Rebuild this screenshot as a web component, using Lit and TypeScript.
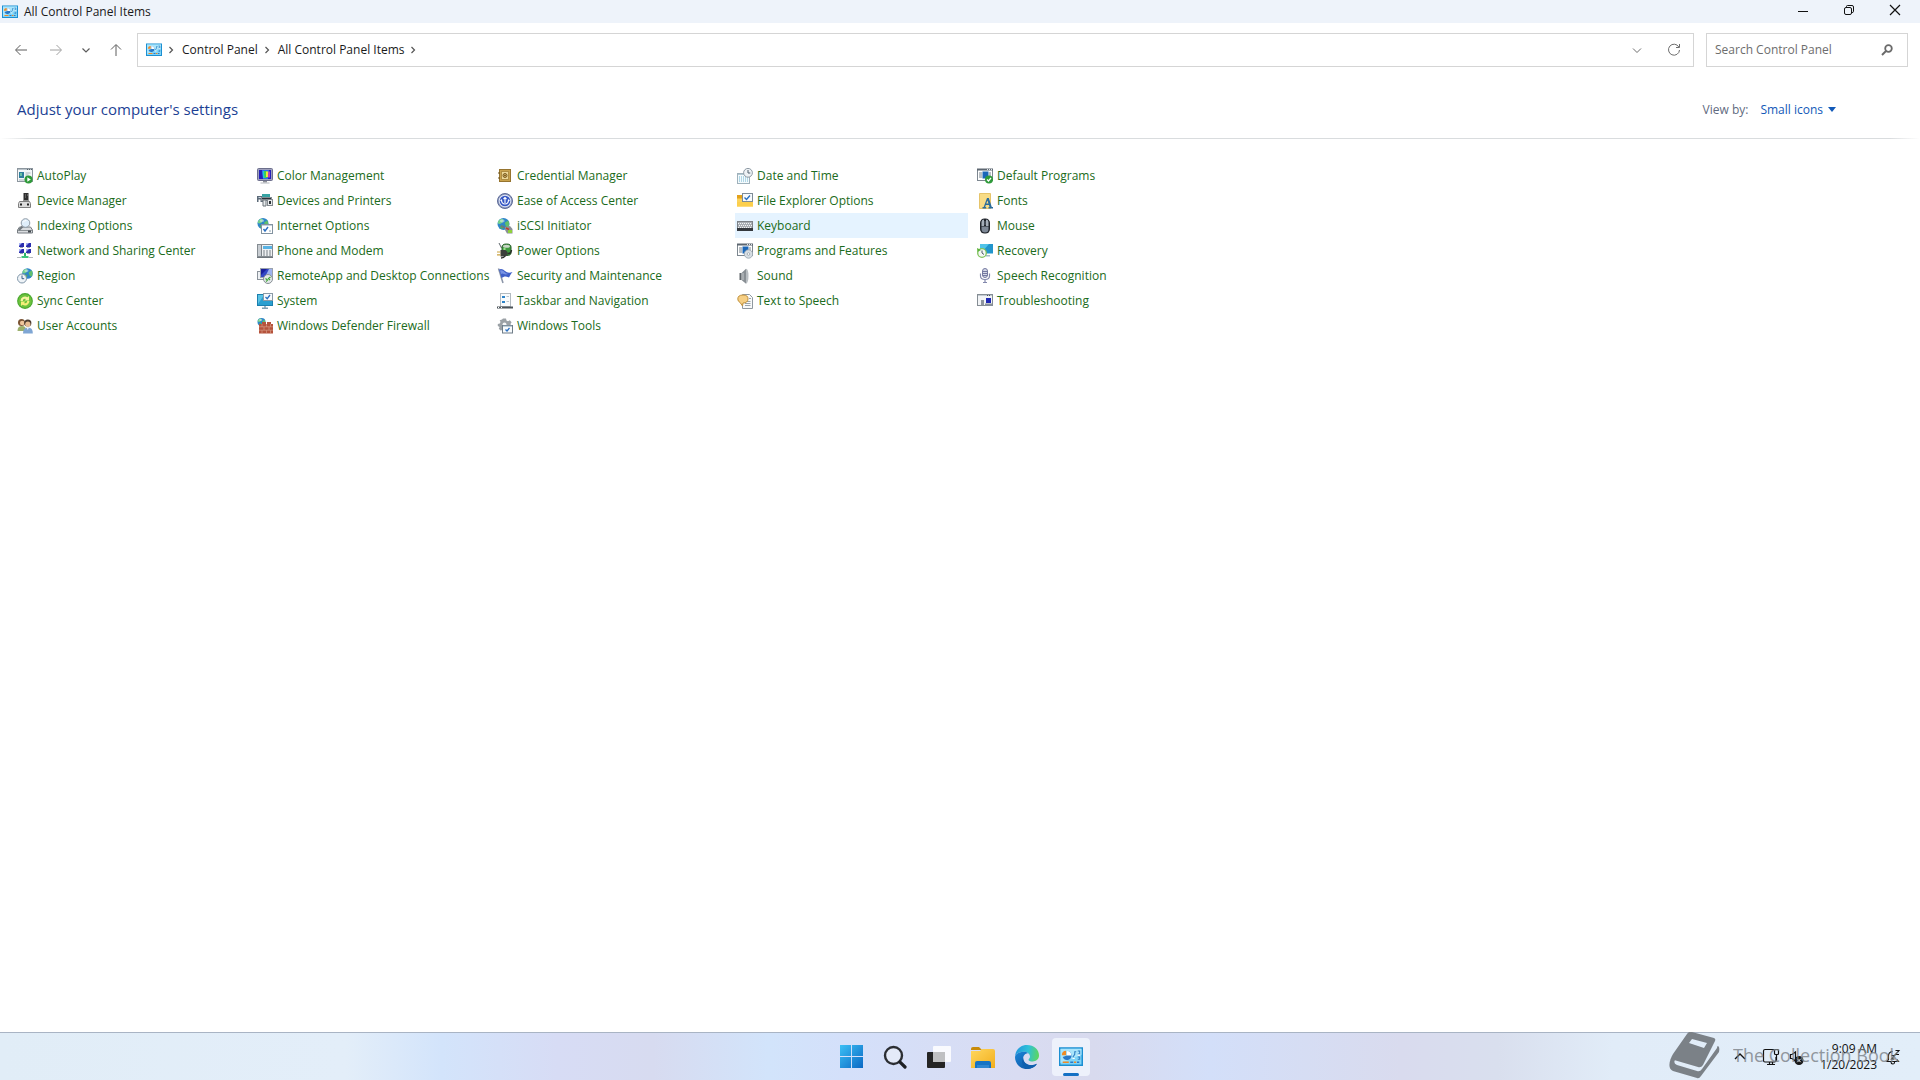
import { LitElement, html, svg, css, TemplateResult } from "lit";
import { customElement, property, state } from "lit/decorators.js";
import { classMap } from "lit/directives/class-map.js";

type Art = TemplateResult<2>;

/* Blue panel with a pie chart and sliders, used in three places. */
const panelArt: Art = svg`
  <rect x="0.5" y="2" width="15" height="11.500" fill="#7fd4f7" stroke="#1b8fd2"/>
  <path d="M1 2.500h14v4L1 12z" fill="#a9e4fb"/>
  <path d="M5.300 7V4A3 3 0 1 1 2.500 8z" fill="#2878c8"/>
  <path d="M5.300 7V4a3 3 0 0 1 2.900 3z" fill="#fff"/>
  <path d="M4.700 6.800H1.900A2.900 2.900 0 0 1 4.700 3.900z" fill="#f08a24"/>
  <path d="M9.200 8.200l1.300-2V4.500h1M12.500 4h1.300v2h-1.300M12.500 8h1.300v1.500h-1.300" stroke="#2c7fc4" stroke-width=".7"/>
  <path d="M12.500 6.800h1.500M9 9h1.500" stroke="#fff" stroke-width=".8"/>
  <path d="M2.500 11.500h4" stroke="#f08a24" stroke-width="1"/>
  <path d="M7.500 11.500h2M12 11.500h1.500" stroke="#2878c8" stroke-width="1"/>
  <path d="M10 11.500h1.500" stroke="#f08a24" stroke-width="1"/>`;

const windowArt: Art = svg`
  <rect x="0.5" y="1.500" width="15" height="11" fill="#fff" stroke="#7d8790"/>
  <path d="M0 1.500h16" stroke="#5d6670" stroke-width="2"/>
  <path d="M10 1.500h1M12 1.500h1M14 1.500h1" stroke="#dfe5ea"/>`;

const globe = (cx: number, cy: number, r: number): Art => svg`
  <g transform="translate(${cx} ${cy}) scale(${r / 5})">
    <circle r="5" fill="#2f86c9"/>
    <path d="M-3.500 -3.500Q-1 -5 0 -3.500L-1 -1L-3 0L-4.800 -0.500Q-4.800 -2.500 -3.500 -3.500z" fill="#74d08c"/>
    <path d="M1 -1L4 -3Q5.500 0 4 3L2 2z" fill="#5fbf6b"/>
    <path d="M-2 1L0 1.500L-1 4.500L-3 3z" fill="#4fae5c"/>
    <ellipse cx="-1" cy="-2.500" rx="2" ry="1.200" fill="#fff" opacity=".45"/>
  </g>`;

const ICONS: Record<string, Art> = {
  autoplay: svg`
    <rect x="0.5" y="0.5" width="15" height="13" fill="#f4f7f9" stroke="#8c969e"/>
    <path d="M1 1.500h14" stroke="#b9c2c9"/><path d="M10 1.500h1M12 1.500h1M14 1.500h1" stroke="#59636b"/>
    <rect x="2" y="4" width="5" height="6" fill="#2f7f9c"/><rect x="3" y="5" width="2" height="3" fill="#6cc0a4"/>
    <path d="M8.500 5h5M8.500 7h3M2 12h6" stroke="#a9b4bb"/>
    <circle cx="11.500" cy="11.500" r="4" fill="#2f9a3a"/><path d="M10.300 9.300v4.400l3.500-2.200z" fill="#fff"/>`,
  device: svg`
    <rect x="6.500" y="0" width="5" height="8" fill="#2e2e2e"/><path d="M8 2h1M10 2h1M8 4h1" stroke="#8d8d8d"/>
    <path d="M7 7h4v3H7z" fill="#8f8f8f"/>
    <path d="M2.500 8.500h10l1 2v4h-12v-4z" fill="#dcdcdc" stroke="#7e7e7e"/>
    <path d="M4 10.500v2M11 10.500v2" stroke="#222" stroke-width="2"/>`,
  indexing: svg`
    <path d="M2.500 9h11l2 3v3H.5v-3z" fill="#d9dcdf" stroke="#777d82"/>
    <path d="M1 12.500h14" stroke="#8d9397"/><rect x="11" y="12.500" width="3" height="2" fill="#444b50"/>
    <path d="M5.500 8.500L2 12" stroke="#6f767c" stroke-width="2"/>
    <circle cx="8.500" cy="5" r="4.300" fill="#dfeefa" stroke="#8f9ba6"/>
    <path d="M6 4.500Q7 2.300 9.500 2.500" stroke="#fff" fill="none"/>`,
  network: svg`
    ${[[2, 0], [9, 0], [2, 6], [9, 6]].map(([x, y]) => svg`
      <rect x=${x} y=${y} width="5" height="4" fill="#2b2fae"/>
      <path d="M${x} ${y}h3l-3 3z" fill="#a9b3f4"/>
      <path d="M${x + 1} ${y + 4.5}h3" stroke="#9a9eb4"/>`)}
    <path d="M7.500 10h1v3h-1z" fill="#2fb36a" stroke="#2fb36a"/>
    <path d="M4.500 14h7" stroke="#3cc47c" stroke-width="2"/>
    <path d="M0 14.500h4M12 14.500h4" stroke="#b4b9bc"/>`,
  region: svg`${globe(10.5, 5.5, 5.3)}
    <circle cx="5" cy="10.500" r="4.500" fill="#eef3f7" stroke="#7f95a8"/>
    <path d="M5 7.500v3.200h2.200" stroke="#3c5d85" fill="none"/>`,
  sync: svg`
    <circle cx="8" cy="8" r="7.900" fill="#49a72e"/><circle cx="8" cy="8" r="6.800" fill="#6cc23e"/>
    <path d="M3.500 8A4.500 4.500 0 0 1 10.500 4.300L12 3v4.500H7.500L9 6Q6 5 5.800 8z" fill="#f7f3a0"/>
    <path d="M12.500 8A4.500 4.500 0 0 1 5.500 11.700L4 13V8.500h4.500L7 10q3 1 3.200-2z" fill="#f5ee7a"/>`,
  users: svg`
    <circle cx="4.500" cy="4.500" r="3.500" fill="#7a5333"/><circle cx="5.200" cy="5" r="2.300" fill="#f0c79c"/>
    <path d="M.5 13q0-5 4.500-5t4 5z" fill="#9bb06c"/>
    <circle cx="10.800" cy="5" r="3.600" fill="#4b3b2e"/><circle cx="10.800" cy="6.200" r="2.600" fill="#e8bd93"/>
    <path d="M6 15.500q0-6 5-6t4.800 6z" fill="#7fa6d4"/><path d="M9.800 9.500h2l-1 2.500z" fill="#fff"/>`,
  color: svg`
    <rect x="0.5" y="0.5" width="15" height="12" rx="1" fill="#9ea0bd" stroke="#6c6f8c"/>
    <rect x="2" y="2" width="12" height="9" fill="#2420b8"/>
    <path d="M5 2h7l-1 9H6z" fill="#2b6df0"/>
    <path d="M5.500 3h5l-.5 7H6z" fill="#22c3dc"/><path d="M7 3h3v7H7.500z" fill="#3dd34d"/>
    <path d="M9 3.500h2.500l-.5 5.500H9z" fill="#f2e23d"/><path d="M11.500 3.500h1.500v6h-2z" fill="#c633c0"/>
    <path d="M6 13h4v1.500H6z" fill="#8b8f97"/><path d="M3.500 15h9" stroke="#b4b7bd"/>`,
  printers: svg`
    <path d="M0 3h7v6H0z" fill="#5c6a78"/><path d="M1.500 4.500h4" stroke="#c9d5e0"/>
    <path d="M5 1h8v3H5z" fill="#36a3a3"/><path d="M4 4h11v4H4z" fill="#858d94"/>
    <path d="M5 5.500h9" stroke="#2c3338"/>
    <path d="M1.500 6.500h2v5h-2z" fill="#fff"/><path d="M6 7h3v6H6z" fill="#e6e9eb" stroke="#6c747b"/>
    <rect x="10.500" y="6.500" width="5" height="6" fill="#e8eaec" stroke="#83898e"/>
    <rect x="12" y="8" width="2" height="3" fill="#2c3338"/>`,
  internet: svg`${globe(6, 5.5, 5.5)}
    <rect x="4.500" y="6.500" width="11" height="9" fill="#fff" stroke="#8393a0"/>
    <path d="M5 7.500h10" stroke="#c5d3de"/>
    <path d="M6.500 11l1.500 2l3-4" stroke="#2a6fc0" stroke-width="1.400" fill="none"/><path d="M12 13h2" stroke="#8aa0b0"/>`,
  phone: svg`
    <rect x="0.5" y="1.500" width="15" height="12" fill="#eef0f2" stroke="#858c92"/>
    <path d="M1 2h3v11H1z" fill="#c8cdd2"/><path d="M4.500 2v11" stroke="#7b8288"/>
    <rect x="6" y="3" width="9" height="3" fill="#58b3e4"/>
    <path d="M6 8h2M9 8h2M12 8h2M6 10h2M9 10h2M12 10h2M6 12h2M9 12h2M12 12h2" stroke="#7b838a"/>
    <path d="M0 14.500h16" stroke="#6f767c"/>`,
  remote: svg`
    <rect x="0.5" y="3.500" width="7" height="8" fill="#eef1f4" stroke="#8b939b"/>
    <rect x="3.500" y="0.500" width="12" height="9" fill="#3347c4" stroke="#9aa2ad"/>
    <path d="M4 1h6L4 7z" fill="#1a1f9a"/><path d="M8 9l4-8h3v8z" fill="#9db2ee"/>
    <circle cx="11" cy="11" r="4.500" fill="#e4e8ea" stroke="#888f95"/>
    <path d="M8.500 10.500l2 1.500l-1.500 1.500M13.500 9l-2 1.500l1.500 1.500" stroke="#3fa535" fill="none" stroke-width="1.200"/>`,
  system: svg`
    <rect x="0.5" y="1.500" width="15" height="11" fill="#2a9fd0" stroke="#1b7fae"/>
    <path d="M1 2h6L1 11z" fill="#6fd3ec" opacity=".7"/>
    <rect x="6.500" y="0.500" width="9" height="7" fill="#f7fafc" stroke="#8a9aa6"/>
    <path d="M8.500 4l1.700 1.700L13 2" stroke="#2a6fc0" stroke-width="1.300" fill="none"/>
    <path d="M8 13v2M5 15.200h6" stroke="#7f9fb2" stroke-width="1.500"/>`,
  firewall: svg`${globe(4.5, 4, 4)}
    <path d="M2 6h3V4h4v2h1V4h4v2h2v9.500H2z" fill="#b5533c"/>
    <path d="M2 8.800h14M2 12.200h14M5 6v2.800M9.500 6v2.800M13.500 6v2.800M7 8.800v3.400M12 8.800v3.400M5 12.200v3.300M9.500 12.200v3.300M13.500 12.200v3.300" stroke="#dba48f" stroke-width=".6"/>`,
  credential: svg`
    <rect x="2.500" y="1.500" width="11" height="12" fill="#c9a24d" stroke="#96742f"/>
    <rect x="4.500" y="3.500" width="7" height="8" fill="#ecd798" stroke="#b08e43"/>
    <circle cx="8" cy="7.500" r="2" fill="#d3b064" stroke="#7d5e22"/><circle cx="8" cy="7.500" r=".8" fill="#5d4413"/>
    <path d="M2 4v2M2 9v2" stroke="#6a5018"/>`,
  ease: svg`
    <circle cx="8" cy="8" r="7.500" fill="#8d99bd" stroke="#5d6b98"/><circle cx="8" cy="8" r="6.200" fill="#e6ebf8"/>
    <circle cx="8" cy="8" r="5.300" fill="#3557c4"/>
    <path d="M8 10V4.500M6.500 6L8 4.500L9.500 6M4.500 6.500Q4.500 11 8 11T11.500 6.500M4.500 6.500l-.8 1.500M11.500 6.500l.8 1.500" stroke="#fff" fill="none" stroke-width="1.100"/>`,
  iscsi: svg`${globe(6.5, 6, 6)}
    <path d="M4 8l5 2l3 3" stroke="#6f767c" stroke-width="1.500" fill="none"/>
    <path d="M8 9l5-1l2.500 3v4.500H10L8 12z" fill="#8a9096"/><rect x="11" y="12" width="4" height="3" fill="#8fd13c"/>
    <path d="M9 10l3 1.500" stroke="#c33c2c" stroke-width="1.500"/>`,
  power: svg`
    <path d="M2 0l2.500 5" stroke="#5d646a"/>
    <path d="M5 4q0-3 4.500-3T14 4v6q0 2.500-4.500 2.500T5 10z" fill="#3f9a3e" stroke="#275c28"/>
    <ellipse cx="9.500" cy="3.300" rx="3.500" ry="1.500" fill="#c9d6c6"/><path d="M7.500 5v3" stroke="#9be08a" stroke-width="2"/>
    <path d="M3.500 7h5l2 2v3l-2 1.500h-5z" fill="#3b3f3b"/>
    <path d="M0 9h3.500M0 11.800h3.500" stroke="#c9a13f" stroke-width="1.200"/>
    <path d="M10.500 10.500Q14 11 14.500 7M8 13q-1 2-4 2" stroke="#2b2e2b" fill="none" stroke-width="1.500"/>`,
  security: svg`
    <path d="M1.500 .5l4.500 14.500" stroke="#8b95a8" stroke-width="1.500"/>
    <path d="M2 1.500Q5 0 8 3t7.500 1Q13.500 6 12 9.500Q9 8 7.500 8.500T4.500 10z" fill="#3f5fc8"/>
    <path d="M3 2.500Q5.500 1.500 7.500 4T12 5.500Q9 7 7 6T4 6z" fill="#8ba4ee" opacity=".75"/>`,
  taskbar: svg`
    <rect x="3.500" y="0.500" width="10" height="13" fill="#f9fbfc" stroke="#b3bac0"/>
    <path d="M5 4h3M5 9h3" stroke="#2c83c8" stroke-width="2"/>
    <path d="M9.500 3.500h2.500M9.500 8.500h2.500" stroke="#b9c4cc"/>
    <path d="M0 14.500h16" stroke="#4b5359" stroke-width="2"/><path d="M1 14.500h1M4 14.500h1" stroke="#fff"/>`,
  tools: svg`
    <path d="M6 .5h3l.5 2l1.500.7l1.800-.9l1.800 2L13.500 6l.5 1.500v2L11 12H5.500l-2 .5l-1.700-1.800l.8-1.700L.8 8V6l2-.6L3.500 4l-.8-1.800L5 1.500z" fill="#9ba1a6"/>
    <circle cx="7.500" cy="6.500" r="2" fill="#f5f6f7"/>
    <rect x="5.500" y="7.500" width="10" height="7.500" fill="#f7fafc" stroke="#6f7d88"/>
    <path d="M6 8h9" stroke="#8aa2b4"/><path d="M8.500 11.500l1.500 1.500l2.500-3" stroke="#2a6fc0" fill="none" stroke-width="1.300"/>`,
  date: svg`
    <rect x="0.5" y="5.500" width="12" height="10" fill="#f3fafd" stroke="#9fb1bb"/>
    <path d="M1 6.500h10" stroke="#b4c9d3"/>
    <path d="M2 9h9M2 11h9M2 13h9" stroke="#6fb4cf" stroke-dasharray="1 1"/>
    <circle cx="11" cy="4.800" r="4.400" fill="#eef2f5" stroke="#8d99a3"/>
    <path d="M11 2v3h2.300" stroke="#50606e" fill="none"/>`,
  explorer: svg`
    <path d="M0 2h5l1.500 1.500H15V13H0z" fill="#e3a21b"/><path d="M0 5.500h16V13.500H0z" fill="#fbd35c"/>
    <rect x="5.500" y="0.500" width="10" height="8" fill="#f7fafc" stroke="#7d8b97"/>
    <path d="M7.500 4.500l2 2L13 2.500" stroke="#2a6fc0" stroke-width="1.400" fill="none"/>
    <path d="M0 9h16v4.500H0z" fill="#fccf4d"/>`,
  keyboard: svg`
    <rect x="0.5" y="3.500" width="15" height="9" fill="#a9aeb4" stroke="#7d8288"/>
    <path d="M1 5.500h14M2 7.500h13M1 9.500h14" stroke="#f4f5f6" stroke-dasharray="1 1"/>
    <path d="M0 11.500h16" stroke="#34383d" stroke-width="3"/>`,
  programs: svg`${windowArt}
    <path d="M2 5h3M2 7h3M2 9h3M12 5h2M12 7h2M12 9h2" stroke="#77828b"/>
    <rect x="5.500" y="3.500" width="6" height="7" fill="#1a66b8"/>
    <circle cx="11.500" cy="11" r="4.200" fill="#d7dee4" stroke="#96a3ad" stroke-width=".8"/>
    <circle cx="11.500" cy="11" r="1.300" fill="#fff" stroke="#8d99a3" stroke-width=".7"/>`,
  sound: svg`
    <path d="M2.500 5h2v7h-2z" fill="#60666b"/><path d="M4.500 5L9 .8v15L4.500 12z" fill="#898f94"/>
    <path d="M9 .8Q11.500 1 11.500 8T9 15.800z" fill="#b9bec2"/><path d="M6 5v7" stroke="#c9cdd0"/>`,
  tts: svg`
    <path d="M5.500 1.500h7l3 3v11h-10z" fill="#f8f9fa" stroke="#8f989f"/>
    <path d="M8 8.500h5.500M8 10.500h5.500M8 12.500h5.500M12 5.500h2" stroke="#9aa4ab"/>
    <path d="M.8 6Q.8 2 6 2t5 4t-5 4l-.5 3l-2.500-3.600Q.8 8.500.8 6z" fill="#f6cf84" stroke="#c1913c"/>`,
  defaults: svg`${windowArt}
    <path d="M2 5h3M2 7h3M2 9h3M12 5h2M12 7h2" stroke="#77828b"/>
    <rect x="5.500" y="3.500" width="6" height="7" fill="#1a66b8"/>
    <circle cx="12" cy="11.500" r="4" fill="#2f9a3a"/><path d="M10 11.500l1.500 1.500l2.500-3" stroke="#fff" stroke-width="1.200" fill="none"/>`,
  fonts: svg`
    <path d="M2.500 .5h11v15h-11z" fill="#f8dc86" stroke="#e6c46a"/>
    <path d="M10 5h1.800l3 9h1.200v1.500h-4.500V14h1l-.6-2H8.800l-.6 2h1v1.500H5.500V14h1.200zM10.400 7.500L9.300 10.600h2.200z" fill="#2a6c9c"/>`,
  mouse: svg`
    <rect x="3" y="0.500" width="10" height="15" rx="4.500" fill="#20242b"/>
    <path d="M4.500 4Q4.500 1.800 7 1.500v6.500H4.500zM11.500 4Q11.500 1.800 9 1.500v6.500h2.500z" fill="#a4adb8"/>
    <path d="M4.500 8.500h7V11q0 3.500-3.500 3.500T4.500 11z" fill="#7e8896"/><path d="M8 3v4" stroke="#5b6470" stroke-width="1.200"/>`,
  recovery: svg`
    <rect x="3" y="1" width="13" height="9.500" fill="#2295cc"/><path d="M3 1h9L5 9H3z" fill="#4fc3e8"/>
    <path d="M9 12.800h4" stroke="#8aa9bb" stroke-width="1.200"/>
    <circle cx="5" cy="10" r="4.300" fill="#f4f8f4" stroke="#7fc25b" stroke-width="1.300"/>
    <path d="M0 5l.5 4L4 7z" fill="#5bb23a"/><path d="M5 7.500V10l2 1.500" stroke="#4b5a64" fill="none"/>`,
  speech: svg`
    <rect x="5.500" y="0.500" width="5" height="9" rx="2.500" fill="#d5d8e8" stroke="#7479a0"/>
    <path d="M5.500 3.500h5M5.500 5.500h5M5.500 7.500h5" stroke="#7479a0"/>
    <path d="M3.500 5.500V8q0 3.500 4.500 3.500T12.500 8V5.500M8 11.500V14M6 14.500h4" stroke="#8388ac" fill="none" stroke-width="1.200"/>`,
  trouble: svg`
    <rect x="0.5" y="1.500" width="15" height="11" fill="#f2f4f6" stroke="#858d94"/>
    <path d="M1 2.500h14" stroke="#c4ccd2"/><path d="M10 2.500h1M12 2.500h1" stroke="#4c555d"/>
    <rect x="9" y="5" width="5" height="5" fill="#1f28b4"/><path d="M8 11.500h7" stroke="#8b929a" stroke-width="2"/>
    <path d="M5.500 7v5" stroke="#8f969e" stroke-width="3"/>`,
};

interface Item { icon: string; label: string; active?: boolean }

const ITEMS: Item[] = [
  { icon: "autoplay", label: "AutoPlay" },
  { icon: "color", label: "Color Management" },
  { icon: "credential", label: "Credential Manager" },
  { icon: "date", label: "Date and Time" },
  { icon: "defaults", label: "Default Programs" },
  { icon: "device", label: "Device Manager" },
  { icon: "printers", label: "Devices and Printers" },
  { icon: "ease", label: "Ease of Access Center" },
  { icon: "explorer", label: "File Explorer Options" },
  { icon: "fonts", label: "Fonts" },
  { icon: "indexing", label: "Indexing Options" },
  { icon: "internet", label: "Internet Options" },
  { icon: "iscsi", label: "iSCSI Initiator" },
  { icon: "keyboard", label: "Keyboard", active: true },
  { icon: "mouse", label: "Mouse" },
  { icon: "network", label: "Network and Sharing Center" },
  { icon: "phone", label: "Phone and Modem" },
  { icon: "power", label: "Power Options" },
  { icon: "programs", label: "Programs and Features" },
  { icon: "recovery", label: "Recovery" },
  { icon: "region", label: "Region" },
  { icon: "remote", label: "RemoteApp and Desktop Connections" },
  { icon: "security", label: "Security and Maintenance" },
  { icon: "sound", label: "Sound" },
  { icon: "speech", label: "Speech Recognition" },
  { icon: "sync", label: "Sync Center" },
  { icon: "system", label: "System" },
  { icon: "taskbar", label: "Taskbar and Navigation" },
  { icon: "tts", label: "Text to Speech" },
  { icon: "trouble", label: "Troubleshooting" },
  { icon: "users", label: "User Accounts" },
  { icon: "firewall", label: "Windows Defender Firewall" },
  { icon: "tools", label: "Windows Tools" },
];

const glyph = (art: Art, size = 16, box = 16) =>
  html`<svg width=${size} height=${size} viewBox="0 0 ${box} ${box}" fill="none" aria-hidden="true">${art}</svg>`;

const line = (d: string, width = 1) =>
  glyph(svg`<path d=${d} stroke="currentColor" stroke-width=${width}/>`);

const base = css`
  :host { font-family: "Open Sans", "Noto Sans", sans-serif; font-size: 12px; line-height: 16px; }
  * { box-sizing: border-box; }
  svg { display: block; flex: none; }
  button, input, select { font: inherit; color: inherit; border: 0; background: none; padding: 0; margin: 0; }
  button { display: flex; align-items: center; justify-content: center; }
  a { color: inherit; text-decoration: none; }
`;

@customElement("title-bar")
export class TitleBar extends LitElement {
  static styles = [base, css`
    :host { display: flex; align-items: center; height: 23px; padding: 0 2px; background: #eef3fa; color: #1a1a1a; }
    .name { flex: 1; margin-left: 6px; }
    .control { width: 46px; height: 23px; padding-bottom: 3px; color: #111; }
  `];
  render() {
    return html`
      ${glyph(panelArt)}
      <span class="name">All Control Panel Items</span>
      <button class="control" aria-label="Minimize">${line("M3 9.500h10")}</button>
      <button class="control" aria-label="Restore">${glyph(svg`
        <rect x="3.500" y="5.500" width="7" height="7" rx="1.500" stroke="currentColor"/>
        <path d="M5.500 5V4.500q0-1 1-1H11q1.500 0 1.500 1.500v4.500q0 1-1.500 1" stroke="currentColor"/>`)}</button>
      <button class="control" aria-label="Close">${line("M3 3l10 10M13 3L3 13", 1.2)}</button>`;
  }
}

@customElement("address-row")
export class AddressRow extends LitElement {
  static styles = [base, css`
    :host { display: flex; align-items: center; padding: 10px 12px; color: #1a1a1a; }
    .nav { display: flex; align-items: center; color: #5c5c5c; width: 125px; }
    .nav button { height: 34px; }
    .back, .up { width: 17px; }
    .forward { width: 17px; margin-left: 18px; color: #a0a0a0; }
    .recent { width: 16px; margin: 0 13px 0 14px; }
    .address { flex: 1; display: flex; align-items: center; height: 34px; border: 1px solid #d5d5d5; padding: 0 1px 0 8px; }
    .crumbs { display: flex; align-items: center; flex: 1; }
    .crumbs svg { color: #555; }
    .sep { margin: 0 3px 0 1px; }
    .tool { width: 37px; height: 32px; color: #6d6d6d; }
    .search { display: flex; align-items: center; width: 202px; height: 34px; margin-left: 12px; border: 1px solid #d5d5d5; padding: 0 12px 0 8px; color: #6a6a6a; }
    .search input { flex: 1; min-width: 0; outline: none; }
    .search input::placeholder { color: #6d6d6d; opacity: 1; }
  `];
  render() {
    const sep = line("M6.500 5l3 3l-3 3", 1.2);
    return html`
      <nav class="nav" aria-label="History">
        <button class="back" aria-label="Back">${line("M14 8H3M7.500 3L2.500 8l5 5")}</button>
        <button class="forward" aria-label="Forward">${line("M2 8h11M8.500 3l5 5l-5 5")}</button>
        <button class="recent" aria-label="Recent locations">${line("M4.500 6.500l3.500 3.500l3.500-3.500", 1.2)}</button>
        <button class="up" aria-label="Up">${line("M8 14V3M3 7.500L8 2.500l5 5")}</button>
      </nav>
      <div class="address">
        <div class="crumbs">
          ${glyph(panelArt)}
          <span class="sep">${sep}</span><a href="#control-panel">Control Panel</a>
          <span class="sep">${sep}</span><a href="#all-items">All Control Panel Items</a>
          <span class="sep">${sep}</span>
        </div>
        <button class="tool" aria-label="Previous locations">${line("M4 6.500l4 4l4-4")}</button>
        <button class="tool" aria-label="Refresh">${glyph(svg`
          <path d="M12.800 5A5.500 5.500 0 1 0 13.500 8M13.500 2v3.500H10" stroke="currentColor"/>`)}</button>
      </div>
      <label class="search">
        <input type="search" aria-label="Search Control Panel" placeholder="Search Control Panel">
        ${glyph(svg`<circle cx="9.500" cy="6.500" r="3.300" stroke="currentColor" stroke-width="1.800"/>
          <path d="M7 9L3 13" stroke="currentColor" stroke-width="2"/>`)}
      </label>`;
  }
}

@customElement("settings-item")
export class SettingsItem extends LitElement {
  @property() icon = "";
  @property() label = "";
  @property({ type: Boolean }) active = false;
  static styles = [base, css`
    :host { display: block; min-width: 0; }
    .item { display: flex; align-items: center; gap: 4px; height: 25px; padding: 0 2px; margin-right: 7px; color: #1b6b20; white-space: nowrap; }
    .item:hover, .active { background: #e5f3ff; }
  `];
  render() {
    return html`<a href="#${this.icon}" class=${classMap({ item: true, active: this.active })}>
      ${glyph(ICONS[this.icon])}<span>${this.label}</span></a>`;
  }
}

@customElement("task-bar")
export class TaskBar extends LitElement {
  static styles = [base, css`
    :host {
      position: relative; display: grid; grid-template-columns: 1fr auto 1fr; height: 48px; border-top: 1px solid #a9b4c4; color: #111;
      background: linear-gradient(90deg, #e1edf7 0%, #e3eef9 18%, #d3e4fb 23%, #d7dcf5 29%, #d7dbf0 34%, #d2e4fb 40%, #d4e0fa 44%, #d9dcf2 53%, #d8daee 57%, #d3dff9 63%, #d9dbee 73%, #d9dfee 78%, #e1ecf8 84%, #e2eef9 100%);
    }
    .apps { grid-column: 2; display: flex; align-items: center; padding-left: 2px; }
    .app { position: relative; width: 44px; height: 46px; }
    .app.open::before { content: ""; position: absolute; inset: 4px 3px; border-radius: 4px; background: #edf1fb; }
    .app.open::after { content: ""; position: absolute; left: 14px; right: 14px; bottom: 4px; height: 3px; border-radius: 2px; background: #1470c4; }
    .app svg { position: relative; }
    .tray { display: flex; align-items: center; justify-content: flex-end; gap: 8px; padding-right: 19px; }
    .tray button { height: 40px; }
    .more { margin-right: 6px; }
    .clock { text-align: right; margin-left: 8px; }
    .mark { position: absolute; right: 21px; top: -1px; display: flex; align-items: center; gap: 13px; height: 46px; color: #7b8187; font-size: 18px; line-height: 24px; pointer-events: none; }
    .mark span { opacity: .8; }
  `];
  render() {
    return html`
      <nav class="apps" aria-label="Apps">
        <button class="app" aria-label="Start">${glyph(svg`
          <defs><linearGradient id="win" x1="0" y1="0" x2="24" y2="24" gradientUnits="userSpaceOnUse"><stop stop-color="#3cc0f5"/><stop offset="1" stop-color="#0a68c4"/></linearGradient></defs>
          <path d="M0 0h11.500v11.500H0zM12.500 0H24v11.500H12.500zM0 12.500h11.500V24H0zM12.500 12.500H24V24H12.500z" fill="url(#win)"/>`, 23, 24)}</button>
        <button class="app" aria-label="Search">${glyph(svg`
          <circle cx="10.500" cy="10.500" r="8.500" fill="#e4eaf8" stroke="#2b2e33" stroke-width="2.400"/>
          <path d="M16.800 16.800L22 22" stroke="#1d2024" stroke-width="3.200" stroke-linecap="round"/>`, 24, 24)}</button>
        <button class="app" aria-label="Task view">${glyph(svg`
          <rect x="0" y="7" width="18" height="16" rx="1" fill="#242424"/>
          <rect x="6" y="1" width="18" height="16" rx="1" fill="#fff" fill-opacity=".85"/>
          <rect x="6" y="7" width="12" height="10" fill="#bfc0c2"/>`, 24, 24)}</button>
        <button class="app" aria-label="File Explorer">${glyph(svg`
          <path d="M0 4q0-2 2-2h6l3 3H0z" fill="#c98b08"/>
          <defs><linearGradient id="fold" x1="0" y1="0" x2="1" y2="1"><stop stop-color="#ffd75e"/><stop offset="1" stop-color="#f2ae1c"/></linearGradient></defs>
          <path d="M0 6h9l2-2h11q2 0 2 2v17H0z" fill="url(#fold)"/>
          <path d="M4 23v-5q0-2 2-2h12q2 0 2 2v5z" fill="#1673c4"/><path d="M6 20h12v3H6z" fill="#2f86d0"/>`, 24, 24)}</button>
        <button class="app" aria-label="Edge">${glyph(svg`
          <defs>
            <linearGradient id="edge-top" x1="0" y1=".3" x2="1" y2=".4"><stop stop-color="#2296dd"/><stop offset=".55" stop-color="#2fc1d8"/><stop offset="1" stop-color="#5dd65f"/></linearGradient>
            <linearGradient id="edge-low" x1="0" y1="0" x2="1" y2="1"><stop stop-color="#1a86d8"/><stop offset="1" stop-color="#0e4d9a"/></linearGradient>
          </defs>
          <path d="M0 11.500C.5 4.500 5.500 0 12 0c7 0 12 4.800 12 10.300c0 4-3 6.200-6.200 6.200c-2.700 0-4.300-.9-4.300-1.800c0-.6 1.500-1.200 1.500-3.200C15 9 12.500 6.700 9 6.700C4.500 6.700 1 8.500 0 11.500z" fill="url(#edge-top)"/>
          <path d="M0 12C.5 8.700 4.500 6.700 9 6.700c2 0 3.500.6 4.500 1.500C10.500 8 8.200 10.200 8.200 13.300c0 4 3.800 6.900 8 6.900c2.400 0 4.300-.7 5.800-1.400C20 22 16.500 24 12 24C5 24 0 18.500 0 12z" fill="url(#edge-low)"/>
          <path d="M8.200 13.300c0 4 3.800 6.900 8 6.900c2.400 0 4.300-.7 5.800-1.400c-2 3.200-5.500 5-9 5.200C7.500 22.500 5.500 17 8.200 13.300z" fill="#0f5fae"/>`, 24, 24)}</button>
        <button class="app open" aria-label="Control Panel">${glyph(panelArt, 24, 16)}</button>
      </nav>
      <div class="tray">
        <button class="more" aria-label="Show hidden icons">${line("M3 10L8 5l5 5", 1.4)}</button>
        <button aria-label="Network">${glyph(svg`
          <path d="M12 1.500H3Q1.500 1.500 1.500 3v9.500q0 1.500 1.500 1.500h9.500q1.500 0 1.500-1.500V9M5 16.500h8M7.500 14v2.500M10.500 14v2.500" stroke="currentColor" stroke-width="1.200"/>
          <rect x="12.500" y="1.500" width="4" height="5" rx="1" stroke="currentColor" stroke-width="1.200"/>
          <path d="M14.500 6.500v6" stroke="currentColor" stroke-width="1.200"/>`, 18, 18)}</button>
        <button aria-label="Volume muted">${glyph(svg`
          <path d="M2.500 5.500H4L7.500 3v9L4 9.500H2.500z" stroke="currentColor" stroke-width="1.200"/>
          <circle cx="11" cy="11.500" r="4.500" fill="#161616"/><path d="M9.300 9.800l3.400 3.400M12.700 9.800l-3.400 3.400" stroke="#fff"/>`)}</button>
        <button class="clock"><span>9:09 AM<br>1/20/2023</span></button>
        <button aria-label="Notifications">${glyph(svg`
          <path d="M7.500 2.500Q3.500 3 3.500 7v3.500L2 12.500h11.500L12 10.500M6 13q0 2 1.800 2T9.500 13" stroke="currentColor" stroke-width="1.100"/>
          <path d="M10.500 1.500h3.500l-3.500 4H14M6.500 6.500h3L6.500 10h3" stroke="currentColor" stroke-width="1.100"/>`)}</button>
      </div>
      <div class="mark">
        <svg width="51" height="47" viewBox="0 0 51 47" fill="currentColor" aria-hidden="true">
          <path fill-rule="evenodd" d="M23 0L45 6Q47 7 46 9L34 33Q32 36 29 35L5 28Q3 27 2 28Q1 27 4 22L18 2Q20 -1 23 0zM23 7l-3 4l15 5l3-5z"/>
          <path d="M2 26Q-2 36 4 39L28 46Q30 47 32 44L50 20Q51 15 49 14Q48 14 48 16L33 37Q31 40 28 39L8 33Q4 31 6 28z"/>
        </svg>
        <span>The Collection Book</span>
      </div>`;
  }
}

@customElement("app-root")
export class AppRoot extends LitElement {
  @state() private view = "Small icons";
  static styles = [base, css`
    :host { display: flex; flex-direction: column; min-height: 100vh; background: #fff; }
    .head { display: flex; align-items: center; justify-content: space-between; height: 61px; padding: 2px 84px 0 17px; }
    h1 { margin: 0; font-size: 15px; line-height: 24px; font-weight: 400; color: #1c3f94; }
    .view { display: flex; align-items: center; padding-top: 2px; color: #5f6b80; }
    .view select { appearance: none; field-sizing: content; margin: 0 5px 0 12px; color: #1259b8; }
    .view svg { color: #1259b8; }
    .rule { height: 1px; background: linear-gradient(90deg, #fff, #d9dcde 30px, #d9dcde calc(100% - 30px), #fff); }
    main { flex: 1; padding: 24px 15px; }
    .grid { display: grid; grid-template-columns: repeat(5, minmax(0, 240px)); }
  `];
  private pick(e: Event) { this.view = (e.target as HTMLSelectElement).value; }
  render() {
    return html`
      <title-bar></title-bar>
      <address-row></address-row>
      <header class="head">
        <h1>Adjust your computer's settings</h1>
        <label class="view">View by:
          <select .value=${this.view} @change=${this.pick}>
            <option>Small icons</option><option>Large icons</option><option>Category</option>
          </select>
          <svg width="8" height="5" viewBox="0 0 8 5" aria-hidden="true"><path d="M0 0h8L4 5z" fill="currentColor"/></svg>
        </label>
      </header>
      <div class="rule"></div>
      <main>
        <div class="grid">
          ${ITEMS.map((i) => html`<settings-item .icon=${i.icon} .label=${i.label} .active=${!!i.active}></settings-item>`)}
        </div>
      </main>
      <task-bar></task-bar>`;
  }
}
